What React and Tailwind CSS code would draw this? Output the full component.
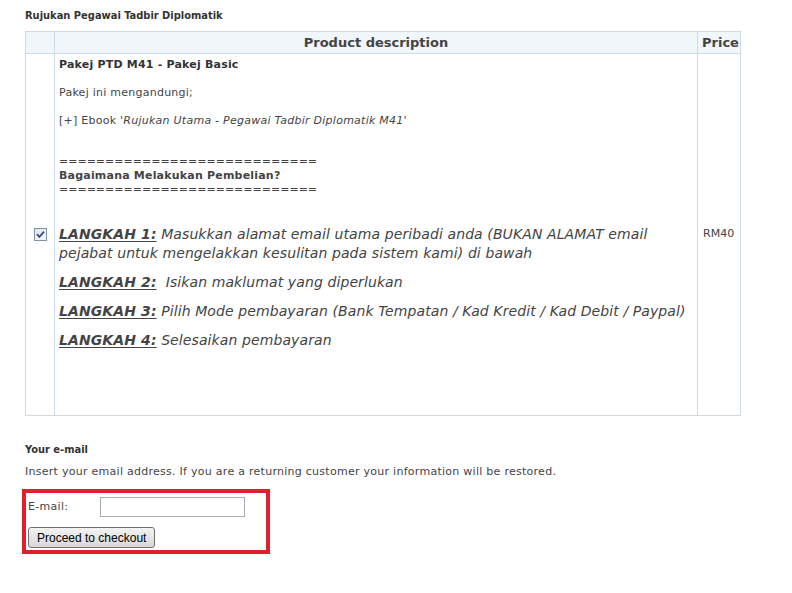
import React, { useState } from "react";

const steps = [
  {
    label: "LANGKAH 1:",
    text: " Masukkan alamat email utama peribadi anda (BUKAN ALAMAT email pejabat untuk mengelakkan kesulitan pada sistem kami) di bawah",
  },
  { label: "LANGKAH 2:", text: "\u00a0 Isikan maklumat yang diperlukan" },
  {
    label: "LANGKAH 3:",
    text: " Pilih Mode pembayaran (Bank Tempatan / Kad Kredit / Kad Debit / Paypal)",
  },
  { label: "LANGKAH 4:", text: " Selesaikan pembayaran" },
];

const App = () => {
  const [checked, setChecked] = useState(true);
  const [email, setEmail] = useState("");

  return (
    <div className="min-h-[593px] bg-white pl-[25px] pt-[9px] font-['DejaVu_Sans',Verdana,sans-serif] text-[11px] text-[#444]">
      <h1 className="font-['DejaVu_Sans_Condensed','DejaVu_Sans',sans-serif] text-[11px] font-bold leading-[14px] text-[#333]">
        Rujukan Pegawai Tadbir Diplomatik
      </h1>

      <table className="mt-[8px] w-[716px] border-collapse border border-[#cddbe8]">
        <thead>
          <tr className="h-[22px] bg-[#f1f6fb]">
            <th className="w-[29px] border border-[#cddbe8]"></th>
            <th className="border border-[#cddbe8] text-center text-[13px] font-bold text-[#444]">
              Product description
            </th>
            <th className="w-[43px] border border-[#cddbe8] pl-[4px] text-left text-[13px] font-bold text-[#444]">
              Price
            </th>
          </tr>
        </thead>
        <tbody>
          <tr className="h-[362px]">
            <td className="border border-[#cddbe8] text-center align-middle">
              <span
                onClick={() => setChecked(!checked)}
                className="inline-flex h-[13px] w-[13px] translate-y-[2px] items-center justify-center border border-[#8292a8] bg-gradient-to-br from-[#dfe6ee] to-[#f7f9fb]"
              >
                {checked && (
                  <svg width="9" height="9" viewBox="0 0 9 9">
                    <path d="M1 4.2 L3.4 6.8 L8 1.6" fill="none" stroke="#3a4a8c" strokeWidth="1.8" />
                  </svg>
                )}
              </span>
            </td>
            <td className="border border-[#cddbe8] px-[4px] pb-[30px] pt-[4px] align-top">
              <p className="font-bold leading-[14px] tracking-[0.2px] text-[#333]">Pakej PTD M41 - Pakej Basic</p>
              <p className="mt-[14px] leading-[14px] tracking-[0.25px]">Pakej ini mengandungi;</p>
              <p className="mt-[14px] leading-[14px] tracking-[0.25px]">
                [+] Ebook '<em>Rujukan Utama - Pegawai Tadbir Diplomatik M41</em>'
              </p>
              <div className="mt-[27px] leading-[14px]">
                <p>============================</p>
                <p className="font-bold tracking-[0.2px]">Bagaimana Melakukan Pembelian?</p>
                <p>============================</p>
              </div>
              <div className="mt-[28px] text-[14px] italic leading-[19px] tracking-[0.1px] text-[#444]">
                {steps.map((s, i) => (
                  <p key={i} className={i === 0 ? "" : "mt-[10px]"}>
                    <span className="font-bold underline underline-offset-[2px]">{s.label}</span>
                    {s.text}
                  </p>
                ))}
              </div>
            </td>
            <td className="border border-[#cddbe8] pl-[5px] align-middle">RM40</td>
          </tr>
        </tbody>
      </table>

      <h2 className="mt-[27px] font-['DejaVu_Sans_Condensed','DejaVu_Sans',sans-serif] text-[11px] font-bold leading-[14px] text-[#333]">
        Your e-mail
      </h2>
      <p className="mt-[8px] leading-[14px] tracking-[0.27px]">
        Insert your email address. If you are a returning customer your information will be restored.
      </p>

      <div className="-ml-[3px] mt-[10px] w-[248px] border-4 border-[#e21f2c] pb-[2px] pl-[2px] pt-[4px]">
        <div className="flex items-center">
          <label className="w-[72px] leading-[14px] tracking-[0.3px]">E-mail:</label>
          <input
            type="text"
            value={email}
            onChange={(e) => setEmail(e.target.value)}
            className="h-[20px] w-[145px] border border-[#a5acb5] bg-white px-1 outline-none"
          />
        </div>
        <button className="mt-[10px] h-[21px] rounded-[3px] border border-[#707070] bg-gradient-to-b from-[#f2f2f2] to-[#d8d8d8] px-[8px] font-['Liberation_Sans',Arial,sans-serif] text-[12px] leading-[18px] text-black">
          Proceed to checkout
        </button>
      </div>
    </div>
  );
};

export default App;
